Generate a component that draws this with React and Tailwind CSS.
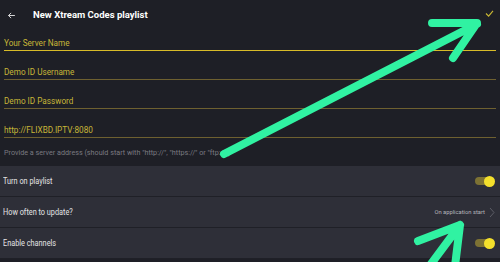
import React from 'react';

const fields = [
    { label: 'Your Server Name', active: true },
    { label: 'Demo ID Username' },
    { label: 'Demo ID Password' },
    { label: 'http://FLIXBD.IPTV:8080' },
];

const Toggle = () => (
    <div className="relative w-[20px] h-[12px] flex items-center">
        <div className="w-[17px] h-[8px] rounded-full bg-[#7d7234]" />
        <div className="absolute right-0 w-[11px] h-[11px] rounded-full bg-[#f4e02c]" />
    </div>
);

const Row = ({ label, children }) => (
    <div className="h-[31px] flex items-center justify-between pl-[3px] pr-[5px] border-b border-[#1f2027]">
        <span className="inline-block origin-left scale-x-[0.86] whitespace-nowrap text-[8.5px] text-[#e4e4e6]">{label}</span>
        {children}
    </div>
);

const App = () => {
    return (
        <div className="relative w-[500px] h-[262px] overflow-hidden bg-[#1e1f26] font-['Roboto',sans-serif]">
            {/* toolbar */}
            <div className="h-[30px] flex items-center pl-[7px] pr-[6px]">
                <svg width="9" height="9" viewBox="0 0 24 24" fill="none" stroke="#e8e8e8" strokeWidth="2.4">
                    <path d="M21 12H4M11 5l-7 7 7 7" />
                </svg>
                <h1 className="ml-[17px] text-[9.5px] font-bold text-white">New Xtream Codes playlist</h1>
                <svg className="ml-auto mb-[4px]" width="9" height="7" viewBox="0 0 10 8" fill="none" stroke="#c9b733" strokeWidth="1.3">
                    <path d="M1 4l3 3 5-6" />
                </svg>
            </div>

            {/* form fields */}
            <div className="px-[4px]">
                {fields.map((f, i) => (
                    <div
                        key={f.label}
                        className={`${i === 0 ? 'pt-[6px]' : 'pt-[14px]'} border-b ${f.active ? 'border-[#d8bb28]' : 'border-[#6e6030]'}`}
                    >
                        <div className="leading-[14px] h-[14px] text-[8.2px] text-[#c7b638] whitespace-nowrap">{f.label}</div>
                    </div>
                ))}
                <p className="mt-[8px] leading-[14px] text-[7.2px] text-[#7a7a81] whitespace-nowrap">
                    Provide a server address (should start with "http://", "https://" or "ftp://")
                </p>
            </div>

            {/* settings */}
            <div className="mt-[6px] bg-[#2e2f38]">
                <Row label="Turn on playlist">
                    <Toggle />
                </Row>
                <Row label="How often to update?">
                    <div className="flex items-center gap-[4px]">
                        <span className="text-[5.8px] text-[#b4b4b8]">On application start</span>
                        <svg width="6" height="11" viewBox="0 0 6 11" fill="none" stroke="#5c5d66" strokeWidth="1">
                            <path d="M1 1l4 4.5L1 10" />
                        </svg>
                    </div>
                </Row>
                <Row label="Enable channels">
                    <Toggle />
                </Row>
            </div>

            {/* green annotation arrows */}
            <svg className="absolute inset-0 pointer-events-none" width="500" height="262" viewBox="0 0 500 262" fill="none" stroke="#30f2a2" strokeWidth="8" strokeLinecap="round" strokeLinejoin="round">
                <path d="M224 154L477 24M432 23H477L453 58" />
                <path d="M428 268L460 225M418 241L460 225L455 266" />
            </svg>
        </div>
    );
};

export default App;
